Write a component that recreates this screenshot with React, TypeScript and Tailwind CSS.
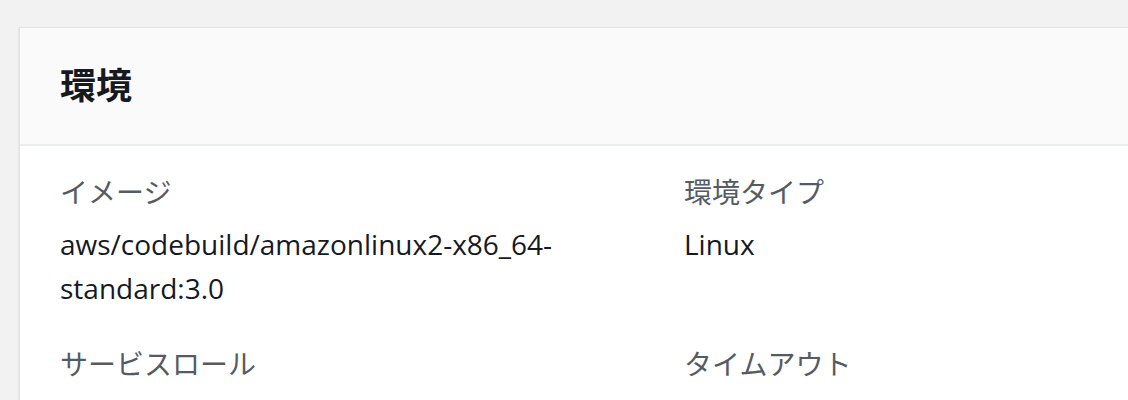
import React from "react";

const fields = [
  { label: "イメージ", value: "aws/codebuild/amazonlinux2-x86_64-standard:3.0" },
  { label: "環境タイプ", value: "Linux" },
  { label: "サービスロール", value: "" },
  { label: "タイムアウト", value: "" },
];

const font = {
  fontFamily:
    '"Open Sans", "Noto Sans CJK JP", "Noto Sans", sans-serif',
};

export default function App() {
  return (
    <div
      className="h-[400px] w-[1128px] overflow-hidden bg-[#f2f2f2] pl-[19px] pt-[27px]"
      style={font}
    >
      <div className="w-[1300px] border-t border-l border-[#e3e3e3] bg-white shadow-[0_1px_2px_rgba(0,0,0,0.15)]">
        <div className="border-b-2 border-[#eaeded] bg-[#fafafa] px-[40px] py-[36px]">
          <h2 className="text-[36px] font-bold leading-[44px] text-[#16191f]">
            環境
          </h2>
        </div>
        <div className="grid grid-cols-[604px_604px] gap-x-[20px] gap-y-[32px] px-[40px] pt-[24px] pb-[60px]">
          {fields.map((f) => (
            <div key={f.label} className="flex flex-col gap-[8px]">
              <div className="text-[28px] leading-[44px] text-[#545b64]">
                {f.label}
              </div>
              {f.value && (
                <div className="break-words text-[28px] leading-[44px] text-[#16191f]">
                  {f.value}
                </div>
              )}
            </div>
          ))}
        </div>
      </div>
    </div>
  );
}
